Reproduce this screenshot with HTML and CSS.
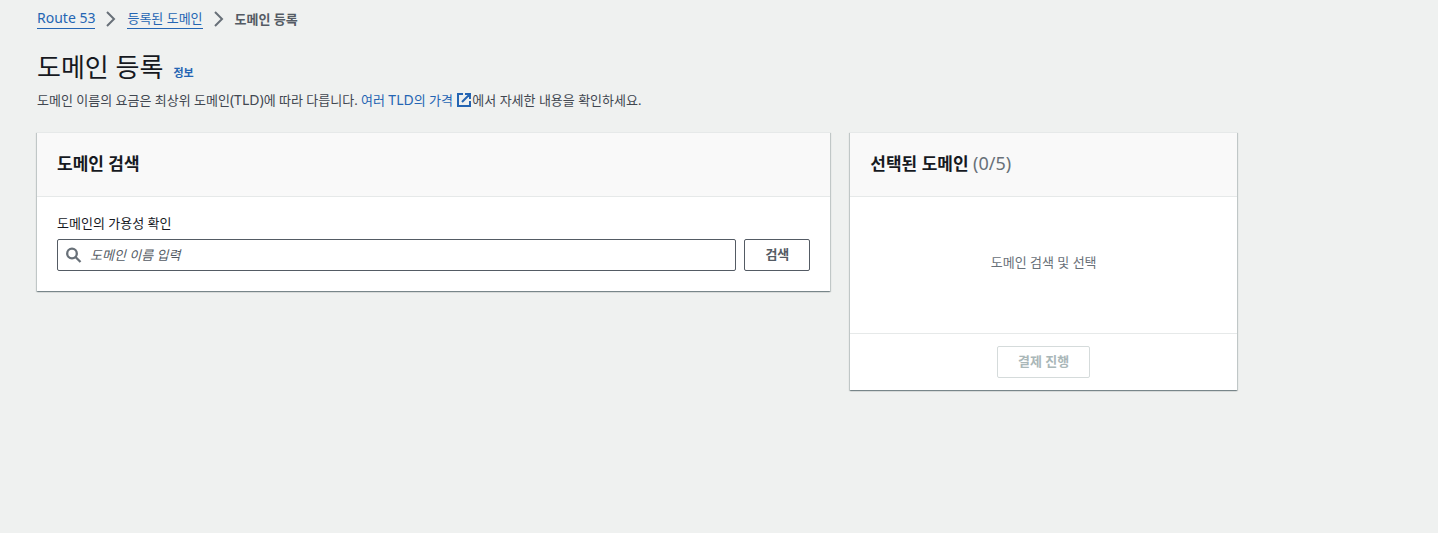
FILE: index.html
```html
<!DOCTYPE html>
<html lang="ko">
<head>
<meta charset="utf-8">
<meta name="viewport" content="width=device-width, initial-scale=1">
<title>도메인 등록</title>
<link rel="stylesheet" href="styles.css">
</head>
<body>
<div class="page">
  <nav class="breadcrumbs" aria-label="breadcrumb">
    <a class="service" href="#">Route 53</a>
    <svg class="chevron" viewBox="0 0 16 16" aria-hidden="true"><path d="M4 1l7 7-7 7"/></svg>
    <a href="#">등록된 도메인</a>
    <svg class="chevron" viewBox="0 0 16 16" aria-hidden="true"><path d="M4 1l7 7-7 7"/></svg>
    <span class="current" aria-current="page">도메인 등록</span>
  </nav>
  <header class="page-header">
    <div class="title-row">
      <h1>도메인 등록</h1>
      <a class="info" href="#">정보</a>
    </div>
    <p class="description">도메인 이름의 요금은 최상위 도메인<span class="latin">(TLD)</span>에 따라 다릅니다. <a href="#">여러 <span class="latin">TLD</span>의 가격 <svg class="external" viewBox="0 0 16 16" aria-hidden="true"><path d="M7 2H2v12h12V9M9 2h5v5M14 2L6 10"/></svg></a>에서 자세한 내용을 확인하세요.</p>
  </header>
  <main class="columns">
    <section class="panel search-panel">
      <h2 class="panel-header">도메인 검색</h2>
      <form class="search-form">
        <label for="domain">도메인의 가용성 확인</label>
        <div class="search-row">
          <div class="search-box">
            <svg class="search-icon" viewBox="0 0 16 16" aria-hidden="true"><circle cx="6" cy="6.5" r="4.8"/><path d="M9.5 10l5 5"/></svg>
            <input id="domain" type="text" placeholder="도메인 이름 입력">
          </div>
          <button class="button" type="button">검색</button>
        </div>
      </form>
    </section>
    <section class="panel cart-panel">
      <h2 class="panel-header">선택된 도메인 <span class="counter">(0/5)</span></h2>
      <p class="empty">도메인 검색 및 선택</p>
      <div class="panel-footer">
        <button class="button" type="button" disabled>결제 진행</button>
      </div>
    </section>
  </main>
</div>
</body>
</html>
```
FILE: styles.css
```css
* {
  box-sizing: border-box;
}

body {
  margin: 0;
  background: #eff1f0;
  color: #16191f;
  font-family: "Noto Sans", "Noto Sans CJK KR", sans-serif;
  font-size: 13px;
  line-height: 20px;
}

h1, h2, p {
  margin: 0;
}

a {
  color: #2465b3;
  text-decoration: none;
}

.page {
  max-width: 1237px;
  padding: 8px 0 20px 37px;
}

.breadcrumbs {
  display: flex;
  align-items: center;
  gap: 8px;
}

.breadcrumbs a {
  border-bottom: 1px solid #2465b3;
}

.breadcrumbs .service {
  font-size: 14px;
}

.breadcrumbs .current {
  color: #545b64;
  font-weight: 700;
}

.chevron {
  width: 16px;
  height: 16px;
  fill: none;
  stroke: #687078;
  stroke-width: 2;
}

.page-header {
  padding: 18px 0 22px;
}

.title-row {
  display: flex;
  align-items: baseline;
  gap: 10px;
}

h1 {
  font-size: 26px;
  font-weight: 400;
  line-height: 40px;
}

.info {
  font-size: 11px;
  font-weight: 700;
}

.description {
  margin-top: 3px;
  color: #414750;
}

.latin {
  font-size: 14px;
}

.external {
  width: 16px;
  height: 16px;
  vertical-align: -3px;
  fill: none;
  stroke: currentColor;
  stroke-width: 2;
}

.columns {
  display: grid;
  grid-template-columns: repeat(12, 1fr);
  gap: 20px;
  align-items: start;
}

.panel {
  background: #fff;
  border-top: 1px solid #e6e9e9;
  box-shadow: 0 1px 1px 0 rgba(0, 28, 36, .3), 1px 1px 1px 0 rgba(0, 28, 36, .15), -1px 1px 1px 0 rgba(0, 28, 36, .15);
}

.search-panel {
  grid-column: span 8;
}

.cart-panel {
  grid-column: span 4;
}

.panel-header {
  padding: 19px 20px 20px;
  background: #f9f9f9;
  border-bottom: 1px solid #e6e9e9;
  font-size: 17px;
  font-weight: 700;
  line-height: 24px;
}

.counter {
  color: #687078;
  font-size: 18px;
  font-weight: 400;
  line-height: 20px;
}

.search-form {
  padding: 16px 20px 20px;
}

.search-form label {
  display: block;
}

.search-row {
  display: flex;
  gap: 8px;
  margin-top: 6px;
}

.search-box {
  display: flex;
  flex: 1;
  align-items: center;
  gap: 8px;
  height: 32px;
  padding: 0 8px;
  border: 1px solid #545b64;
  border-radius: 2px;
}

.search-icon {
  flex: none;
  width: 16px;
  height: 16px;
  fill: none;
  stroke: #687078;
  stroke-width: 2.3;
}

.search-box input {
  flex: 1;
  min-width: 0;
  padding: 0;
  border: 0;
  outline: 0;
  background: none;
  color: inherit;
  font: inherit;
}

.search-box input::placeholder {
  color: #545b64;
  font-style: italic;
  opacity: 1;
}

.button {
  height: 32px;
  padding: 0 20px 2px;
  border: 1px solid #545b64;
  border-radius: 2px;
  background: #fff;
  color: #545b64;
  font: inherit;
  font-weight: 700;
}

.button:disabled {
  border-color: #d5dbdb;
  color: #aab7b8;
}

.empty {
  padding: 55px 20px 61px;
  color: #687078;
  text-align: center;
}

.panel-footer {
  display: flex;
  justify-content: center;
  padding: 12px 20px;
  border-top: 1px solid #e6e9e9;
}
```
